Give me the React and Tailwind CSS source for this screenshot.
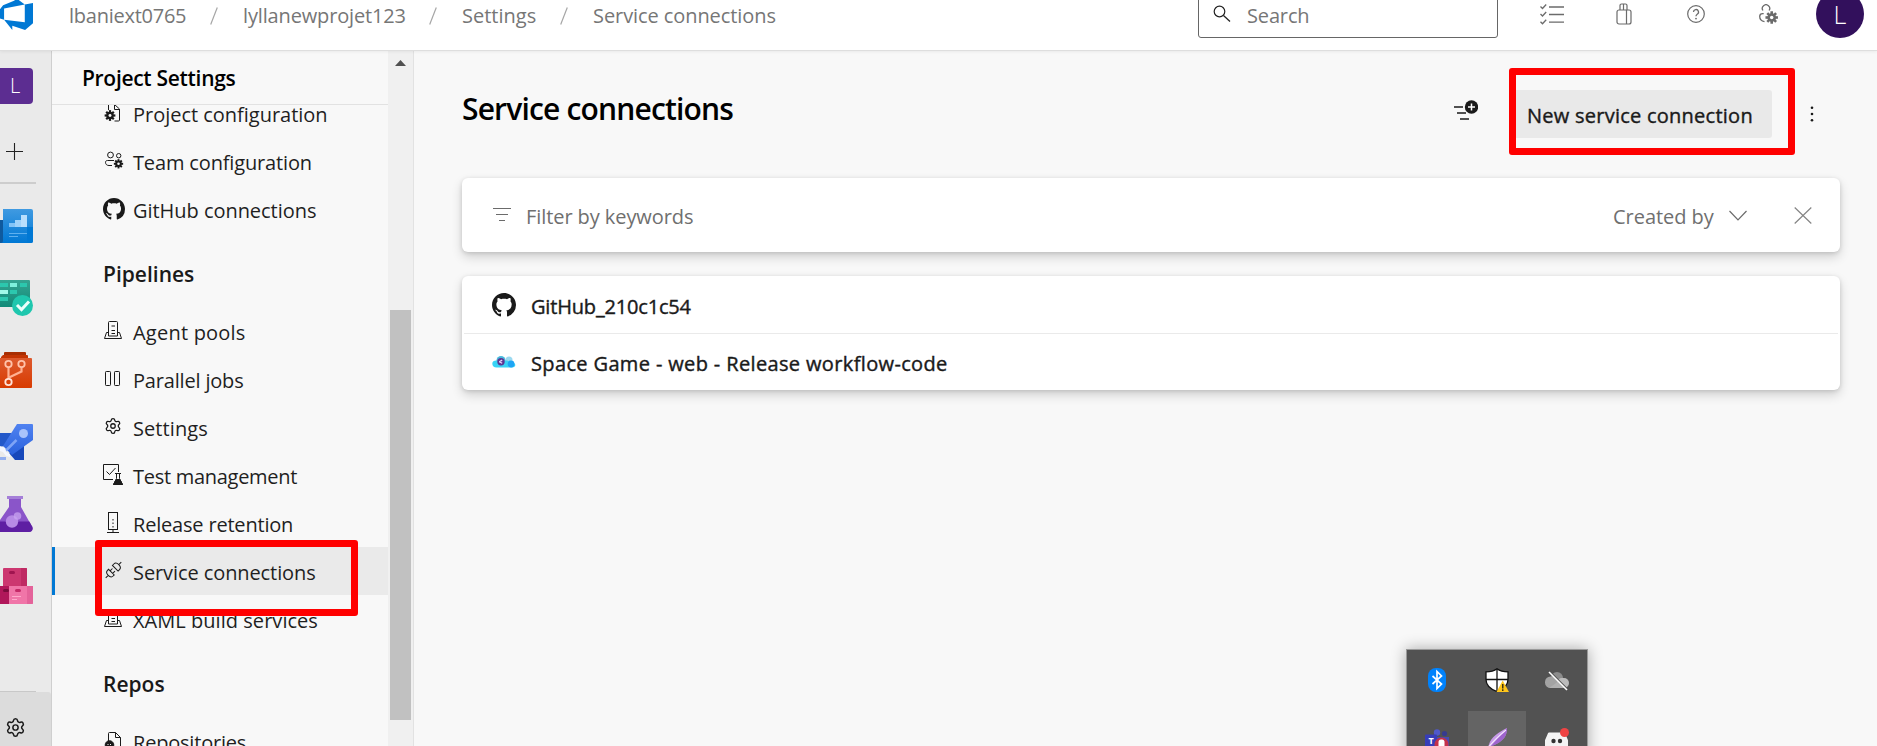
import React from "react";
import { Settings } from "lucide-react";

const Svg = ({ w, h, className = "", children }) => (
  <svg width={w} height={h} viewBox={`0 0 ${w} ${h}`} fill="none" className={`block shrink-0 ${className}`}>
    {children}
  </svg>
);

const GithubMark = ({ size, className = "" }) => (
  <svg width={size} height={size} viewBox="0 0 16 16" fill="currentColor" className={`block shrink-0 ${className}`}>
    <path d="M8 0C3.58 0 0 3.58 0 8c0 3.54 2.29 6.53 5.47 7.59.4.07.55-.17.55-.38 0-.19-.01-.82-.01-1.49-2.01.37-2.53-.49-2.69-.94-.09-.23-.48-.94-.82-1.13-.28-.15-.68-.52-.01-.53.63-.01 1.08.58 1.23.82.72 1.21 1.87.87 2.33.66.07-.52.28-.87.51-1.07-1.78-.2-3.64-.89-3.64-3.95 0-.87.31-1.59.82-2.15-.08-.2-.36-1.02.08-2.12 0 0 .67-.21 2.2.82.64-.18 1.32-.27 2-.27s1.36.09 2 .27c1.53-1.04 2.2-.82 2.2-.82.44 1.1.16 1.92.08 2.12.51.56.82 1.27.82 2.15 0 3.07-1.87 3.75-3.65 3.95.29.25.54.73.54 1.48 0 1.07-.01 1.93-.01 2.2 0 .21.15.46.55.38A8.013 8.013 0 0 0 16 8c0-4.42-3.58-8-8-8z" />
  </svg>
);

const Cog = ({ x, y, r = 3, hole = "#f8f8f8", color = "#1a1a1a" }) => (
  <g transform={`translate(${x} ${y})`}>
    {[0, 45, 90, 135].map((a) => (
      <rect key={a} x={-r * 0.3} y={-r * 1.45} width={r * 0.6} height={r * 2.9} fill={color} transform={`rotate(${a})`} />
    ))}
    <circle r={r} fill={color} />
    <circle r={r * 0.4} fill={hole} />
  </g>
);

/* ---------- brand and rail icons ---------- */

const DevOpsLogo = () => (
  <svg width="33" height="33" viewBox="0 0 24 24" className="block shrink-0">
    <path
      fill="#0078d4"
      d="M0 8.877L2.247 5.91l8.405-3.416V.022l7.37 5.393L2.966 8.338v8.225L0 15.707zm24-4.45v14.651l-5.753 4.9-9.303-3.057v3.056l-5.978-7.416 15.057 1.798V5.415z"
    />
  </svg>
);

const OverviewIcon = () => (
  <Svg w={33} h={36}>
    <defs>
      <linearGradient id="ov" x1="0" y1="0" x2="0" y2="1">
        <stop offset="0" stopColor="#409ae1" />
        <stop offset="1" stopColor="#0078d4" />
      </linearGradient>
    </defs>
    <path d="M0 12h5v23H0z" fill="#0f5a9e" />
    <path d="M3 1h28a2 2 0 0 1 2 2v30a2 2 0 0 1-2 2H1a2 2 0 0 0 2-2z" fill="url(#ov)" />
    <path d="M27 19h6v14a2 2 0 0 1-2 2h-4z" fill="#0078d4" />
    <path d="M9 15h6v-3h6v7H9z" fill="#83c4f7" />
    <path d="M15 12h6v7h-6z" fill="#9fd2fa" />
    <path d="M21 7h6v12h-6z" fill="#b9dffd" />
    <path d="M9 25.500h18M9 28.500h9" stroke="#5eb0ef" />
  </Svg>
);

const BoardsIcon = () => (
  <Svg w={33} h={36}>
    <defs>
      <linearGradient id="bd" x1="0" y1="0" x2="0" y2="1">
        <stop offset="0" stopColor="#35a592" />
        <stop offset="1" stopColor="#118a78" />
      </linearGradient>
    </defs>
    <path d="M0 0h29a1 1 0 0 1 1 1v25a1 1 0 0 1-1 1H0z" fill="url(#bd)" />
    <path d="M0 3h8v4H0zM20 3h7v4h-7zM10 10h7v4h-7zM0 17h8v4H0z" fill="#2cc7ae" />
    <path d="M10 3h7v4h-7z" fill="#7ef0dc" />
    <path d="M0 10h8v4H0z" fill="#9ff9e8" />
    <circle cx="22.500" cy="25.500" r="10.500" fill="#1fc7ae" />
    <path d="M17 25l4.500 4.500L29 21.500" stroke="#eafffb" strokeWidth="3" />
  </Svg>
);

const ReposIcon = () => (
  <Svg w={33} h={36}>
    <defs>
      <linearGradient id="rp" x1="0" y1="0" x2="0" y2="1">
        <stop offset="0" stopColor="#dd5a2e" />
        <stop offset="1" stopColor="#d83b01" />
      </linearGradient>
    </defs>
    <path d="M5 0h20a1 1 0 0 1 1 1v3H4V1a1 1 0 0 1 1-1z" fill="#a82e03" />
    <path d="M3 3h24a1 1 0 0 1 1 1v4H1V5z" fill="#c33403" />
    <path d="M0 6h31a1 1 0 0 1 1 1v28a1 1 0 0 1-1 1H0z" fill="url(#rp)" />
    <g stroke="#ffc3ab" strokeWidth="1.800">
      <path d="M8.500 15v12M21.500 15v4.500L9 25.500" strokeWidth="2.200" stroke="#ffb091" />
      <circle cx="8.500" cy="12" r="3.200" />
      <circle cx="21.500" cy="12" r="3.200" />
      <circle cx="8.500" cy="30" r="3.200" stroke="#ffe3d9" />
    </g>
  </Svg>
);

const PipelinesIcon = () => (
  <Svg w={33} h={36}>
    <defs>
      <linearGradient id="pp" x1="0" y1="0" x2="0" y2="1">
        <stop offset="0" stopColor="#5082f0" />
        <stop offset="1" stopColor="#2a62dd" />
      </linearGradient>
    </defs>
    <path d="M0 9h12L4 22l-4 1z" fill="#2358c9" />
    <path d="M24 20v16h-9l-6-7z" fill="#1748ba" />
    <path d="M17 0h15a1 1 0 0 1 1 1v15L12 31 3 22z" fill="url(#pp)" />
    <circle cx="23.500" cy="9.500" r="4.500" fill="#a9c3fb" />
    <path d="M6 26.500L16.500 16" stroke="#7ea4f6" strokeWidth="2.500" />
    <path d="M0 22l5 2 1 4 4 2v3l-4-1-3-4-3-1z" fill="#f4f7ff" />
    <path d="M0 33h6v3H0z" fill="#93aff0" />
  </Svg>
);

const TestPlansIcon = () => (
  <Svg w={33} h={36}>
    <path d="M9 3h12v8l11 19.500c1.500 3 0 5.500-3 5.500H0V24L9 11z" fill="#8a55c9" />
    <path d="M0 25.500h29.300l2.900 5c1.300 3-.2 5.500-3.200 5.500H0z" fill="#5e1fa3" />
    <path d="M7 0h16v3H7z" fill="#a57fd8" />
    <circle cx="12" cy="25.500" r="6.200" fill="#b78be6" />
    <circle cx="17.500" cy="20" r="3.800" fill="#c9a5f0" opacity=".75" />
  </Svg>
);

const ArtifactsIcon = () => (
  <Svg w={33} h={36}>
    <path d="M4 0h22a1 1 0 0 1 1 1v17H3V1a1 1 0 0 1 1-1z" fill="#cc3770" />
    <path d="M21 0h5a1 1 0 0 1 1 1v17h-6z" fill="#bf2a63" />
    <path d="M0 18h9v18H0z" fill="#b0175a" />
    <path d="M9 18h24v17a1 1 0 0 1-1 1H9z" fill="#f075a8" />
    <path d="M27 18h6v17a1 1 0 0 1-1 1h-5z" fill="#e4639a" />
    <rect x="9" y="3" width="6" height="3" rx="1.500" fill="#a01550" />
    <rect x="3" y="21" width="6" height="3" rx="1.500" fill="#7a0c3c" />
    <rect x="15" y="21" width="6" height="3" rx="1.500" fill="#c42a68" />
    <path d="M12 28.500h9M12 31.500h5" stroke="#ffa8cb" />
  </Svg>
);

/* ---------- top bar icons ---------- */

const TasksIcon = () => (
  <Svg w={24} h={22}>
    <g stroke="#6b6b6b">
      <path d="M9 4h15M9 11.500h15M9 19.200h15" strokeWidth="1.300" />
      <path d="M.5 3.500l2 2L6.200 1.500M.5 11l2 2L6.200 9M.5 18.700l2 2 3.700-4" strokeWidth="1.300" />
    </g>
  </Svg>
);

const BagIcon = () => (
  <Svg w={16} h={22} className="ml-[52px]">
    <g stroke="#6b6b6b" strokeWidth="1.200">
      <rect x="1" y="7" width="14" height="14" rx="2" />
      <path d="M10.500 7v14M4 7V2.500a1.500 1.500 0 0 1 1.500-1.500h4A1.500 1.500 0 0 1 11 2.500V7M7.500 1v6" />
    </g>
  </Svg>
);

const HelpIcon = () => (
  <Svg w={18} h={18} className="ml-[55px]">
    <circle cx="9" cy="9" r="8.300" stroke="#6b6b6b" strokeWidth="1.200" />
    <path d="M6.500 7a2.500 2.500 0 1 1 3.700 2.200C9.300 9.800 9 10.200 9 11.300" stroke="#6b6b6b" strokeWidth="1.300" />
    <circle cx="9" cy="13.600" r=".9" fill="#6b6b6b" />
  </Svg>
);

const UserCogIcon = () => (
  <Svg w={19} h={20} className="ml-[54px]">
    <path d="M3.900 6.500a3.700 3.700 0 1 1 6.200 0M5.500 17.700C2.500 17 .7 15.200.7 12.500.7 10.600 2 9.700 3.700 9.700h1" stroke="#6b6b6b" strokeWidth="1.300" />
    <Cog x={12.700} y={13.500} r={4.300} color="#6b6b6b" hole="#fff" />
  </Svg>
);

/* ---------- settings menu icons ---------- */

const S = ({ children }) => (
  <Svg w={22} h={24}>
    <g stroke="#1a1a1a" strokeWidth="1">
      {children}
    </g>
  </Svg>
);

const ProjectConfigIcon = () => (
  <S>
    <path d="M5.500 9V3.500M11.500 3.500l5 4.500V19a1 1 0 0 1-1 1h-4M11.500 3.500v5h5" />
    <g stroke="none">
      <Cog x={7} y={14.500} r={3.700} />
    </g>
  </S>
);
const TeamConfigIcon = () => (
  <S>
    <circle cx="7.500" cy="6" r="2.900" />
    <circle cx="15.700" cy="6.700" r="2.200" />
    <path d="M9 16.500H6c-2.200 0-3.500-1.300-3.500-3.200 0-1.200.8-1.800 2-1.800H11" />
    <g stroke="none">
      <Cog x={15.500} y={14.800} r={3.200} />
    </g>
  </S>
);
const GithubIcon = () => <GithubMark size={22} className="text-[#1a1a1a]" />;
const AgentIcon = () => (
  <S>
    <path d="M5.500 17V3.500a1 1 0 0 1 1-1h7a1 1 0 0 1 1 1V17zM5.500 13.500h-2l-2 6h17l-2-6h-2M8.500 7h3.500M8.500 11.500h3.500M8.500 14.500h3.500" />
  </S>
);
const ParallelIcon = () => (
  <S>
    <rect x="2.500" y="4.500" width="5" height="14" rx=".8" />
    <rect x="11.500" y="4.500" width="5" height="14" rx=".8" />
  </S>
);
const GearIcon = () => <Settings size={18} strokeWidth={1.7} className="-mt-[1px] ml-[1px] shrink-0 text-[#1a1a1a]" />;
const TestIcon = () => (
  <S>
    <path d="M10 16.500H.5v-15h15V9M3.500 8.500l3 3 6-6.500M12 10.500h6" />
    <path d="M13.500 11v4.500L10.500 21.500h9l-3-6V11" />
    <path d="M13 16.500h4l2.500 5h-9z" fill="#1a1a1a" />
  </S>
);
const ReleaseIcon = () => (
  <S>
    <rect x="5.500" y="1.500" width="9" height="17" />
    <path d="M10 18.500v2.500" />
    <path d="M4 21.500h12" />
    <path d="M10 8v1.500M10 11.500V13M10 15v1.500" />
  </S>
);
const PlugIcon = () => (
  <S>
    <g transform="translate(10.500 11) rotate(-45)">
      <path d="M-11 0h3.500M7.500 0H11M-7.500 0c0-3 1.500-4 3-4h1.500v8h-1.500c-1.500 0-3-1-3-4zM7.500 0c0-3-1.500-4-3-4H2.500v8h2c1.500 0 3-1 3-4zM-3-1.800H.3M-3 1.800H.3" />
    </g>
  </S>
);
const RepoIcon = () => (
  <S>
    <path d="M5.500 12V4.500a1 1 0 0 1 1-1h6l5 5V22M12.500 3.500v5h5" />
    <circle cx="6.500" cy="16" r="4.300" fill="#1a1a1a" />
    <path d="M4.500 15l1 1M8 15l-1 1" stroke="#f8f8f8" />
  </S>
);

const sections = [
  {
    items: [
      [ProjectConfigIcon, "Project configuration", "tracking-[-0.02px]"],
      [TeamConfigIcon, "Team configuration", "tracking-[-0.15px]"],
      [GithubIcon, "GitHub connections", "tracking-[-0.04px]"],
    ],
  },
  {
    title: "Pipelines",
    items: [
      [AgentIcon, "Agent pools", "tracking-[0.22px]"],
      [ParallelIcon, "Parallel jobs", "tracking-[-0.18px]"],
      [GearIcon, "Settings", "tracking-[0.08px]"],
      [TestIcon, "Test management", "tracking-[-0.28px]"],
      [ReleaseIcon, "Release retention", "tracking-[-0.19px]"],
      [PlugIcon, "Service connections", "tracking-[-0.09px]", true],
      [AgentIcon, "XAML build services", "tracking-[0.04px]"],
    ],
  },
  { title: "Repos", items: [[RepoIcon, "Repositories", "tracking-[-0.2px]"]] },
];

function TopBar() {
  return (
    <header className="relative z-10 flex h-[51px] shrink-0 items-start border-b border-[#dedede] bg-white shadow-[0_1px_3px_rgba(0,0,0,0.06)]">
      <div className="flex h-[28px] w-full items-center text-[20px] leading-[28px] text-[#767676]">
        <div className="-mt-[1px] w-[69px]">
          <DevOpsLogo />
        </div>
        <nav className="flex h-[28px] flex-1 items-center pt-[3px]">
          <span className="w-[141px] tracking-[-0.25px]">lbaniext0765</span>
          <Slash />
          <span className="w-[186px] tracking-[-0.15px]">lyllanewprojet123</span>
          <Slash />
          <span className="w-[98px]">Settings</span>
          <Slash />
          <span className="tracking-[-0.08px]">Service connections</span>
        </nav>
        <div className="flex h-[48px] w-[300px] shrink-0 items-center rounded-[3px] border border-[#666] pl-[14px]">
          <Svg w={18} h={18} className="mr-[16px]">
            <circle cx="6.500" cy="6.500" r="5.300" stroke="#222" strokeWidth="1.200" />
            <path d="M10.500 10.500l6.500 6" stroke="#222" strokeWidth="1.300" />
          </Svg>
          <span className="pt-[3px] tracking-[-0.15px]">Search</span>
        </div>
        <div className="flex items-center pl-[42px]">
          <TasksIcon />
          <BagIcon />
          <HelpIcon />
          <UserCogIcon />
        </div>
        <div className="mr-[13px] ml-[38px] flex size-[48px] shrink-0 items-center justify-center rounded-full bg-[#32105c] text-[25px] leading-[28px] font-light text-white">L</div>
      </div>
    </header>
  );
}

const Slash = () => (
  <Svg w={8} h={18} className="mr-[25px]">
    <path d="M.7 17.500L7.300.5" stroke="#a6a6a6" strokeWidth="1.200" />
  </Svg>
);

function Rail() {
  return (
    <aside className="flex w-[52px] shrink-0 flex-col border-r border-[#cfcfcf] bg-[#eaeaea] pt-[17px]">
      <div className="flex h-[36px] w-[33px] items-center rounded-r-[4px] bg-[#5c2d91] pl-[10px] text-[20px] font-light text-white">L</div>
      <Svg w={17} h={17} className="mt-[39px] ml-[6px]">
        <path d="M8.500 0v17M0 8.500h17" stroke="#222" strokeWidth="1.100" />
      </Svg>
      <div className="mt-[22px] h-[2px] w-[36px] bg-[#cdcdcd]" />
      <div className="mt-[24px] flex flex-col gap-[36px]">
        <OverviewIcon />
        <BoardsIcon />
        <ReposIcon />
        <PipelinesIcon />
        <TestPlansIcon />
        <ArtifactsIcon />
      </div>
      <div className="mt-auto w-[36px] border-t border-[#c8c8c8]" />
      <div className="h-[54px] shrink-0 rounded-tr-[3px] bg-[#dcdcdc] pt-[25px] pl-[5px]">
        <Settings size={21} strokeWidth={1.7} className="text-[#1a1a1a]" />
      </div>
    </aside>
  );
}

function Sidebar() {
  return (
    <aside className="flex w-[362px] shrink-0 border-r border-[#e2e2e2]">
      <div className="flex w-[336px] flex-col bg-[#f8f8f8]">
        <h2 className="h-[54px] shrink-0 border-b border-[#e2e2e2] pt-[13px] pl-[30px] text-[21px] leading-[28px] font-semibold tracking-[-0.3px] text-black">
          Project Settings
        </h2>
        <div className="flex min-h-0 flex-1 flex-col justify-start overflow-hidden">
          <div className="-mt-[16px]">
            {sections.map((s, i) => (
              <section key={i}>
                {s.title && (
                  <h3 className="h-[74px] pt-[27px] pl-[51px] text-[21px] leading-[28px] font-semibold text-[#1a1a1a]">{s.title}</h3>
                )}
                {s.items.map(([Icon, label, track, active]) => (
                  <div
                    key={label}
                    className={`flex h-[48px] items-center border-l-[3px] ${active ? "border-[#0078d4] bg-[#eaeaea]" : "border-transparent"}`}
                  >
                    <span className="flex w-[78px] items-center pb-[1px] pl-[48px]">
                      <Icon />
                    </span>
                    <span className={`pt-[4px] text-[20px] leading-[26px] whitespace-nowrap text-[#1f1f1f] ${track}`}>{label}</span>
                  </div>
                ))}
              </section>
            ))}
          </div>
        </div>
      </div>
      <div className="flex w-[25px] flex-col items-center bg-[#f0f0f0] pt-[9px]">
        <Svg w={11} h={6}>
          <path d="M0 6L5.500 0 11 6z" fill="#505050" />
        </Svg>
        <div className="mt-[244px] h-[410px] w-[21px] bg-[#c1c1c1]" />
      </div>
    </aside>
  );
}

const cardShadow = "rounded-[6px] bg-white shadow-[0_5px_11px_rgba(0,0,0,0.16),0_1px_4px_rgba(0,0,0,0.13)]";
const mediumText = "[-webkit-text-stroke:0.4px_currentColor]";

const ReleaseCloudIcon = () => (
  <Svg w={24} h={12}>
    <circle cx="17" cy="4" r="3.500" fill="#9ad9f0" />
    <circle cx="9" cy="4.500" r="4.500" fill="#48b9dd" />
    <path d="M4 4.500h11l4 1.500c3 0 4.300 1.500 4.300 3s-1.300 2.500-3.300 2.500H4.500C2 11.500.3 10 .3 7.800S2 4.500 4 4.500z" fill="#38d3f5" />
    <circle cx="19" cy="8" r="3.400" fill="#1ea5f5" />
    <circle cx="9" cy="5.700" r="3.700" fill="#5b3592" />
    <path d="M7.200 5.700l3-1.600M7.200 5.700l3 1.600" stroke="#e3d5fa" strokeWidth="1.300" />
  </Svg>
);

function Main() {
  return (
    <main className="flex flex-1 flex-col bg-[#f8f8f8] pr-[37px] pl-[48px]">
      <div className="flex h-[127px] items-start pt-[39px]">
        <h1 className="flex-1 pt-[1px] text-[30px] leading-[36px] font-semibold tracking-[-0.83px] text-black">Service connections</h1>
        <Svg w={24} h={22} className="mt-[9px] mr-[31px]">
          <path d="M0 8h9M3 14h9M6 20h9" stroke="#1a1a1a" strokeWidth="1.500" />
          <circle cx="17.500" cy="8" r="6.700" fill="#1a1a1a" />
          <path d="M17.500 4.500v7M14 8h7" stroke="#fff" strokeWidth="1.500" />
        </Svg>
        <button className={`h-[48px] w-[263px] rounded-[3px] bg-[#e9e9e9] pt-[3px] pl-[18px] text-left text-[20px] leading-[28px] tracking-[0.25px] whitespace-nowrap text-[#1a1a1a] ${mediumText}`}>
          New service connection
        </button>
        <Svg w={4} h={16} className="mt-[16px] mr-[26px] ml-[38px]">
          <circle cx="2" cy="1.700" r="1.300" fill="#1a1a1a" />
          <circle cx="2" cy="8" r="1.300" fill="#1a1a1a" />
          <circle cx="2" cy="14.300" r="1.300" fill="#1a1a1a" />
        </Svg>
      </div>
      <div className={`flex h-[74px] items-center pt-[2px] pl-[31px] text-[20px] leading-[28px] text-[#6f6f6f] ${cardShadow}`}>
        <Svg w={18} h={14} className="-mt-[5px] mr-[15px]">
          <path d="M0 1.500h18M3 7.500h12M6 13.500h6" stroke="#6b6b6b" strokeWidth="1.200" />
        </Svg>
        <span className="flex-1 pt-[2px] tracking-[-0.08px]">Filter by keywords</span>
        <span className="w-[116px] pt-[2px] tracking-[-0.04px]">Created by</span>
        <Svg w={18} h={11} className="-mt-[2px] mr-[47px]">
          <path d="M.5 1L9 9.800 17.500 1" stroke="#6b6b6b" strokeWidth="1.200" />
        </Svg>
        <Svg w={18} h={17} className="-mt-[2px] mr-[28px]">
          <path d="M.7.5l16.600 16M17.300.5L.7 16.500" stroke="#858585" strokeWidth="1.200" />
        </Svg>
      </div>
      <div className={`mt-[24px] flex h-[114px] flex-col text-[20px] leading-[28px] text-[#1a1a1a] ${cardShadow}`}>
        <div className="mx-[2px] flex h-[58px] items-center border-b border-[#eaeaea] pl-[28px]">
          <GithubMark size={24} className="mr-[15px]" />
          <span className={`pt-[5px] tracking-[-0.18px] ${mediumText}`}>GitHub_210c1c54</span>
        </div>
        <div className="flex flex-1 items-center gap-[15px] pl-[30px]">
          <ReleaseCloudIcon />
          <span className={`pt-[3px] tracking-[0.36px] ${mediumText}`}>Space Game - web - Release workflow-code</span>
        </div>
      </div>
    </main>
  );
}

const BluetoothTray = () => (
  <Svg w={24} h={24}>
    <rect x="3" width="18" height="24" rx="8" fill="#0082fc" />
    <path d="M7.500 8l9 8-4.500 4.500v-17l4.500 4.500-9 8" stroke="#fff" strokeWidth="1.700" />
  </Svg>
);
const ShieldTray = () => (
  <Svg w={24} h={24}>
    <path d="M12 .7c3 2.300 6.500 3.200 11 3.200v7.600c0 5.500-4 9.500-11 12-7-2.500-11-6.500-11-12V3.900c4.500 0 8-.9 11-3.200z" fill="#fff" stroke="#111" strokeWidth="1.300" />
    <path d="M12 1v22M1 11.500h22" stroke="#111" strokeWidth="1.300" />
    <path d="M17.700 12.500L24 24H11.500z" fill="#ffc61a" />
    <path d="M17.800 16v4.500M17.800 21.300v1.700" stroke="#111" strokeWidth="1.200" />
  </Svg>
);
const CloudTray = () => (
  <Svg w={24} h={24}>
    <circle cx="12" cy="10" r="6" fill="#8c8c8c" />
    <rect x="0" y="8.500" width="13" height="11.500" rx="5.500" fill="#a3a3a3" />
    <rect x="12" y="10" width="12" height="10" rx="5" fill="#bcbcbc" />
    <path d="M4 20l10-7 8 6.500c-1 .5-2 .5-3 .5z" fill="#b0b0b0" />
    <path d="M5.500 4.500l17 17" stroke="#525252" strokeWidth="1.800" />
    <path d="M4 4l18 18" stroke="#fff" strokeWidth="1.600" />
  </Svg>
);
const TeamsTray = () => (
  <Svg w={24} h={24}>
    <circle cx="12" cy="3.500" r="3.200" fill="#5059c9" />
    <circle cx="19.500" cy="4.500" r="2.600" fill="#363b8f" />
    <path d="M12 8h12v16H12z" fill="#464bb3" />
    <rect y="5.500" width="12" height="12" rx="1" fill="#373db8" />
    <text x="6" y="14.500" textAnchor="middle" fontSize="9" fontWeight="700" fill="#fff">T</text>
    <circle cx="16.500" cy="15.500" r="7" fill="#c4314b" />
    <rect x="13.500" y="10.500" width="6" height="10" rx="2.500" fill="#fff" />
  </Svg>
);
const FeatherTray = () => (
  <Svg w={24} h={24}>
    <path d="M22 1c0 6-2 10-6 13-3 2.500-6 4-10 5L2 22l2-4.500C6 10 14 5 22 1z" fill="#c79be8" />
    <path d="M22 1c0 6-2 10-6 13-3 2.500-6 4-10 5z" fill="#8d4cc2" opacity=".7" />
    <path d="M21 3C15 8 8 14 2 22" stroke="#f3e4ff" strokeWidth="1.100" />
  </Svg>
);
const DiscordTray = () => (
  <Svg w={24} h={24}>
    <path d="M4 5.500h15l3 7V24H1V12.500z" fill="#f4f4f4" stroke="#f4f4f4" strokeWidth="2" strokeLinejoin="round" />
    <circle cx="8.500" cy="13" r="2.200" fill="#333" />
    <circle cx="15" cy="13" r="2.200" fill="#333" />
    <circle cx="19.500" cy="4.500" r="4.500" fill="#ef4444" />
  </Svg>
);

function TrayFlyout() {
  return (
    <div className="absolute top-[649px] left-[1406px] z-20 grid h-[110px] w-[182px] grid-cols-[61px_58px_61px] grid-rows-[61px_60px] border border-[#9a9a9a] bg-[#525252] shadow-[0_0_14px_rgba(0,0,0,0.32)]">
      <div className="pt-[18px] pl-[18px]"><BluetoothTray /></div>
      <div className="pt-[18px] pl-[17px]"><ShieldTray /></div>
      <div className="pt-[18px] pl-[19px]"><CloudTray /></div>
      <div className="pt-[18px] pl-[18px]"><TeamsTray /></div>
      <div className="bg-[#646464] pt-[16px] pl-[17px]"><FeatherTray /></div>
      <div className="pt-[17px] pl-[19px]"><DiscordTray /></div>
    </div>
  );
}

export default function App() {
  return (
    <div className="relative flex h-[746px] w-[1877px] flex-col overflow-hidden bg-[#f8f8f8] font-['Open_Sans','Noto_Sans',sans-serif]">
      <TopBar />
      <div className="flex min-h-0 flex-1">
        <Rail />
        <Sidebar />
        <Main />
      </div>
      <TrayFlyout />
      <div className="absolute top-[540px] left-[95px] z-30 h-[76px] w-[263px] rounded-[3px] border-[7px] border-[#ff0000]" />
      <div className="absolute top-[68px] left-[1509px] z-30 h-[87px] w-[286px] rounded-[3px] border-[7px] border-[#ff0000]" />
    </div>
  );
}
